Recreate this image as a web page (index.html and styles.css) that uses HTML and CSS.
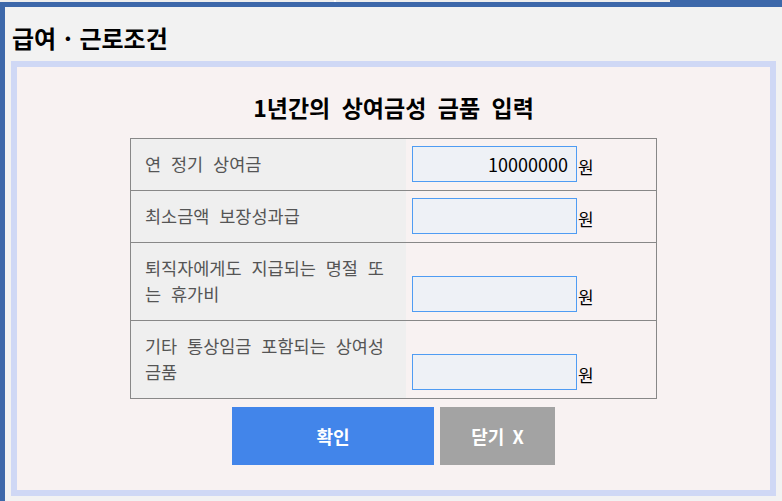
FILE: index.html
```html
<!DOCTYPE html>
<html lang="ko">
<head>
    <meta charset="UTF-8">
    <meta name="viewport" content="width=device-width, initial-scale=1.0">
    <title>급여 · 근로조건</title>
    <link rel="stylesheet" href="styles.css">
</head>
<body>
    <div class="topbar">
        <div class="tabs">
            <span class="tab"></span>
            <span class="tab"></span>
        </div>
    </div>
    <div class="frame">
        <h2 class="page-title">급여 · 근로조건</h2>
        <div class="panel">
            <h3 class="panel-title">1년간의 상여금성 금품 입력</h3>
            <table class="bonus-table">
                <tr>
                    <td class="label">연 정기 상여금</td>
                    <td class="value">
                        <div class="field"><input type="text" class="amount" value="10000000"><span class="unit">원</span></div>
                    </td>
                </tr>
                <tr>
                    <td class="label">최소금액 보장성과급</td>
                    <td class="value">
                        <div class="field"><input type="text" class="amount"><span class="unit">원</span></div>
                    </td>
                </tr>
                <tr>
                    <td class="label">퇴직자에게도 지급되는 명절 또는 휴가비</td>
                    <td class="value">
                        <div class="field"><input type="text" class="amount"><span class="unit">원</span></div>
                    </td>
                </tr>
                <tr>
                    <td class="label">기타 통상임금 포함되는 상여성 금품</td>
                    <td class="value">
                        <div class="field"><input type="text" class="amount"><span class="unit">원</span></div>
                    </td>
                </tr>
            </table>
            <div class="buttons">
                <button class="btn btn-ok">확인</button>
                <button class="btn btn-close">닫기 X</button>
            </div>
        </div>
    </div>
</body>
</html>
```

FILE: styles.css
```css
body {
    margin: 0;
    padding: 0;
    background-color: #f2f2f2;
    font-family: "Noto Sans CJK KR", "Liberation Sans", sans-serif;
}
.topbar {
    height: 7px;
    background-color: #3d68aa;
}
.tabs {
    display: flex;
    gap: 2px;
    width: 670px;
    height: 2px;
    background-color: #ffffff;
}
.tab {
    flex: 1;
    background-color: #eeeeee;
}
.frame {
    border-left: 5px solid #3d68aa;
    padding: 0 6px 4px 6px;
    height: 494px;
    box-sizing: border-box;
}
.page-title {
    margin: 0;
    padding: 16px 0 8px 1px;
    font-size: 24px;
    line-height: 30px;
    word-spacing: 1px;
    font-weight: bold;
    color: #000;
}
.panel {
    border: 6px solid #cfd8f5;
    background-color: #f8f2f2;
    padding: 24px 0 25px 0;
}
.panel-title {
    margin: 0 0 15px 0;
    text-align: center;
    font-size: 23px;
    line-height: 32px;
    word-spacing: 5px;
    font-weight: bold;
    color: #000;
}
.bonus-table {
    width: 70%;
    margin: 0 auto;
    border-collapse: collapse;
    border: 1px solid #888;
}
.bonus-table td {
    border-top: 1px solid #888;
    padding: 0;
}
.label {
    width: 249px;
    padding: 12px 12px 13px 14px !important;
    background-color: #efefef;
    color: #555;
    font-size: 17.5px;
    line-height: 26px;
    word-spacing: 5px;
    word-break: break-all;
    vertical-align: middle;
}
.value {
    vertical-align: bottom;
    padding: 7px 6px 8px 6px !important;
}
.field {
    display: flex;
    align-items: flex-end;
}
.amount {
    width: 165px;
    height: 36px;
    box-sizing: border-box;
    margin: 0;
    border: 1px solid #4f9cf3;
    background-color: #eef1f6;
    padding: 0 8px 0 4px;
    font-family: "Noto Sans CJK KR", "Liberation Sans", sans-serif;
    font-size: 18px;
    color: #000;
    text-align: right;
    outline: none;
}
.unit {
    margin-left: 1px;
    font-size: 17px;
    line-height: 30px;
    color: #000;
}
.buttons {
    display: flex;
    justify-content: center;
    gap: 6px;
    margin-top: 8px;
}
.btn {
    height: 58px;
    border: none;
    color: #fff;
    font-family: "Noto Sans CJK KR", "Liberation Sans", sans-serif;
    font-size: 18px;
    font-weight: bold;
    word-spacing: 3px;
    cursor: pointer;
}
.btn-ok {
    width: 202px;
    background-color: #4285ea;
}
.btn-close {
    width: 115px;
    background-color: #a3a3a3;
}
```
